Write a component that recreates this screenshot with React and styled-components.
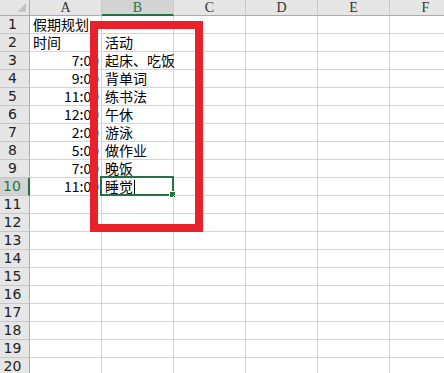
import styled, { createGlobalStyle } from "styled-components";

const GlobalStyle = createGlobalStyle`
  html, body {
    margin: 0;
    padding: 0;
    background: #ffffff;
    overflow: hidden;
  }
`;

const COLS = ["A", "B", "C", "D", "E", "F"];
const ROWS = 20;

const data = {
  1: { A: "假期规划" },
  2: { A: "时间", B: "活动" },
  3: { A: "7:00", B: "起床、吃饭" },
  4: { A: "9:00", B: "背单词" },
  5: { A: "11:00", B: "练书法" },
  6: { A: "12:00", B: "午休" },
  7: { A: "2:00", B: "游泳" },
  8: { A: "5:00", B: "做作业" },
  9: { A: "7:00", B: "晚饭" },
  10: { A: "11:00", B: "睡觉" },
};

const Sheet = styled.div`
  position: relative;
  width: 444px;
  height: 373px;
  overflow: hidden;
  display: grid;
  grid-template-columns: 30px repeat(6, 72px);
  grid-template-rows: 16px repeat(${ROWS}, 18px);
  font-family: "Noto Sans CJK SC", "DejaVu Sans", sans-serif;
`;

const Corner = styled.div`
  position: relative;
  background: #e6e6e6;
  border-right: 1px solid #ababab;
  border-bottom: 1px solid #ababab;
  box-sizing: border-box;
  &::after {
    content: "";
    position: absolute;
    right: 3px;
    bottom: 3px;
    width: 0;
    height: 0;
    border-left: 9px solid transparent;
    border-bottom: 9px solid #c4c4c4;
  }
`;

const ColHead = styled.div`
  box-sizing: border-box;
  background: ${(p) => (p.$active ? "#d3d3d3" : "#e6e6e6")};
  border-right: 1px solid #c8c8c8;
  border-bottom: ${(p) => (p.$active ? "2px solid #217346" : "1px solid #ababab")};
  color: ${(p) => (p.$active ? "#217346" : "#333")};
  font-family: "Liberation Serif", "DejaVu Serif", serif;
  font-size: 14px;
  line-height: 15px;
  text-align: center;
`;

const RowHead = styled.div`
  box-sizing: border-box;
  background: ${(p) => (p.$active ? "#d3d3d3" : "#e6e6e6")};
  border-right: ${(p) => (p.$active ? "2px solid #217346" : "1px solid #ababab")};
  border-bottom: 1px solid #c8c8c8;
  color: ${(p) => (p.$active ? "#217346" : "#222")};
  font-family: "DejaVu Sans", sans-serif;
  font-size: 14px;
  line-height: 17px;
  text-align: center;
  padding-right: 4px;
`;

const Cell = styled.div`
  position: relative;
  box-sizing: border-box;
  border-right: 1px solid #d4d4d4;
  border-bottom: 1px solid #d4d4d4;
  font-size: 14px;
  line-height: 17px;
  color: #000;
  white-space: nowrap;
  padding: 0 2px 0 3px;
  text-align: ${(p) => (p.$num ? "right" : "left")};
  z-index: ${(p) => (p.$spill ? 1 : 0)};
`;

const Selection = styled.div`
  position: absolute;
  left: -2px;
  top: -2px;
  right: -1px;
  bottom: -1px;
  border: 2px solid #217346;
  pointer-events: none;
  &::after {
    content: "";
    position: absolute;
    right: -4px;
    bottom: -4px;
    width: 5px;
    height: 5px;
    background: #217346;
    border: 1px solid #fff;
  }
`;

const Caret = styled.span`
  display: inline-block;
  width: 1px;
  height: 14px;
  background: #000;
  vertical-align: -2px;
  margin-left: 1px;
`;

const Marker = styled.div`
  position: absolute;
  left: 90px;
  top: 21px;
  width: 113px;
  height: 211px;
  box-sizing: border-box;
  border: 8px solid #e8212b;
  pointer-events: none;
  z-index: 5;
`;

function renderCell(row, col) {
  const value = data[row]?.[col] ?? "";
  const isNum = /^\d/.test(value);
  const selected = row === 10 && col === "B";
  return (
    <Cell key={`${col}${row}`} $num={isNum} $spill={row === 1 && col === "A"}>
      {value}
      {selected && <Caret />}
      {selected && <Selection />}
    </Cell>
  );
}

export default function App() {
  const rows = Array.from({ length: ROWS }, (_, i) => i + 1);
  return (
    <>
      <GlobalStyle />
      <Sheet>
        <Corner />
        {COLS.map((c) => (
          <ColHead key={c} $active={c === "B"}>
            {c}
          </ColHead>
        ))}
        {rows.map((r) => [
          <RowHead key={`h${r}`} $active={r === 10}>
            {r}
          </RowHead>,
          ...COLS.map((c) => renderCell(r, c)),
        ])}
        <Marker />
      </Sheet>
    </>
  );
}
